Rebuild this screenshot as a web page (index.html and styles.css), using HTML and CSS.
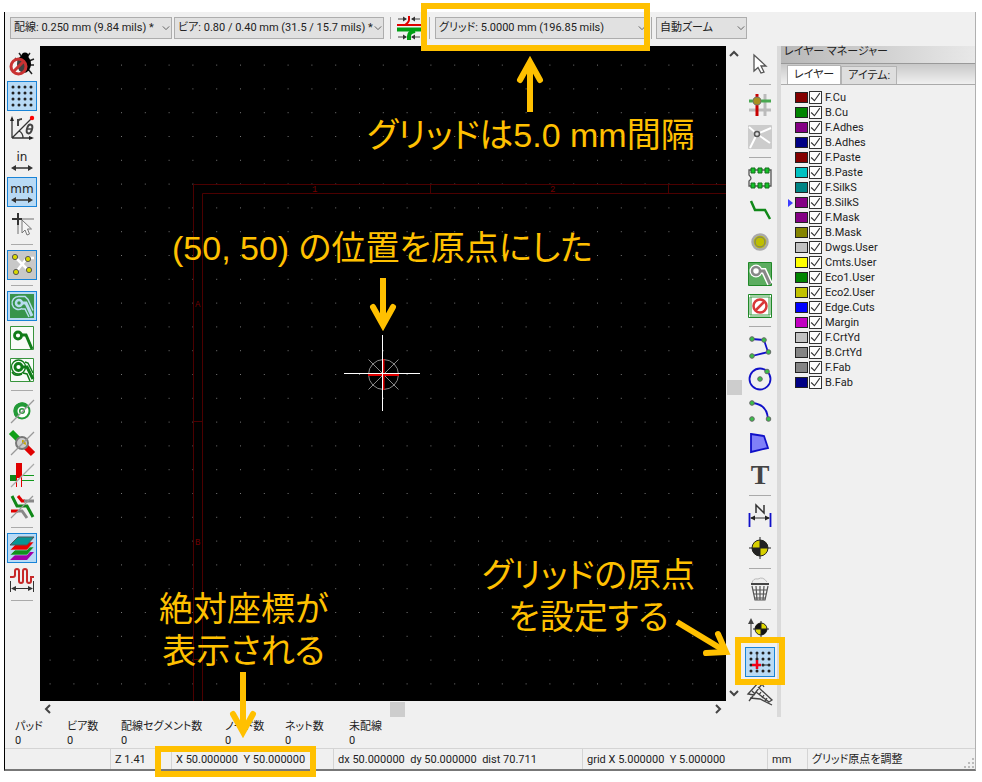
FILE: index.html
```html
<!DOCTYPE html>
<html lang="ja">
<head>
  <meta charset="UTF-8" />
  <meta name="viewport" content="width=device-width, initial-scale=1.0" />
  <title>グリッド原点の設定</title>
  <link rel="stylesheet" href="styles.css">
</head>
<body>
<div class="app">
  <div class="topbar">
    <div class="combo combo-track">
      <select aria-label="配線幅"><option>配線: 0.250 mm (9.84 mils) *</option></select>
      <svg class="chevron" viewBox="0 0 10 6"><path d="M1 1l4 4 4-4"/></svg>
    </div>
    <div class="combo combo-via">
      <select aria-label="ビアサイズ"><option>ビア: 0.80 / 0.40 mm (31.5 / 15.7 mils) *</option></select>
      <svg class="chevron" viewBox="0 0 10 6"><path d="M1 1l4 4 4-4"/></svg>
    </div>
    <span class="vsep"></span>
    <button class="top-btn" aria-label="自動配線幅">
      <svg viewBox="0 0 24 24">
        <path d="M1 3h8M15 3h8M1 21h8M15 21h8" stroke="#444"/>
        <path d="M6 .5L10 3 6 5.500zM18 .5L14 3l4 2.500zM6 18.500l4 2.500-4 2.500zM18 18.500L14 21l4 2.500z" fill="#333"/>
        <path d="M12 0v4q0 2-4 5" fill="none" stroke="#e00000" stroke-width="2"/>
        <path d="M0 9h24" stroke="#e00000" stroke-width="2"/>
        <path d="M0 13.500h24" stroke="#00a014" stroke-width="4"/>
        <path d="M18 15q-6 1-6 5v4" fill="none" stroke="#00a014" stroke-width="4"/>
      </svg>
    </button>
    <span class="vsep"></span>
    <div class="combo combo-grid">
      <select aria-label="グリッド"><option>グリッド: 5.0000 mm (196.85 mils)</option></select>
      <svg class="chevron" viewBox="0 0 10 6"><path d="M1 1l4 4 4-4"/></svg>
    </div>
    <span class="vsep"></span>
    <div class="combo combo-zoom">
      <select aria-label="ズーム"><option>自動ズーム</option></select>
      <svg class="chevron" viewBox="0 0 10 6"><path d="M1 1l4 4 4-4"/></svg>
    </div>
  </div>

  <div class="main">
    <div class="toolbar toolbar-left">
      <button aria-label="DRC オフ">
        <svg viewBox="0 0 24 24">
          <path d="M9 1l3 4M20 1l-3 4M19 9l5-2M20 13h4M18 17l4 5M5 6l4 3" stroke="#222" stroke-width="1.500"/>
          <ellipse cx="14" cy="12" rx="7" ry="9" fill="#000"/><circle cx="15" cy="4" r="3.500" fill="#000"/>
          <circle cx="8.500" cy="14.500" r="7.500" fill="#fff" fill-opacity=".25" stroke="#c93232" stroke-width="3"/>
          <path d="M3.500 19.500l10-10" stroke="#c93232" stroke-width="3"/>
        </svg>
      </button>
      <button class="on" aria-label="グリッド表示">
        <svg viewBox="0 0 24 24"><path d="M3 3h19M3 9h19M3 15h19M3 21h19" stroke="#222" stroke-width="3" stroke-linecap="round" stroke-dasharray="0 6"/></svg>
      </button>
      <button aria-label="極座標">
        <svg viewBox="0 0 24 24">
          <path d="M2 22V2M2 22h20M2 22L21 3M9 15q4 2 4 7" fill="none" stroke="#333" stroke-width="1.300"/>
          <path d="M2 0L0 5h4zM24 22l-5-2v4z" fill="#222"/>
          <path d="M8 10V3M8 5q1-2 4-2" fill="none" stroke="#444" stroke-width="2"/>
          <ellipse cx="19.500" cy="13" rx="2.500" ry="4.500" transform="rotate(18 19.500 13)" fill="none" stroke="#444" stroke-width="2"/>
          <path d="M17 13h5" stroke="#444" stroke-width="1.500"/><circle cx="22" cy="2" r="2.200" fill="#f00"/>
        </svg>
      </button>
      <button class="unit" aria-label="インチ単位"><span>in</span>
        <svg viewBox="0 0 24 6"><path d="M3 3h18" stroke="#333" stroke-width="1.500"/><path d="M6 0L1 3l5 3zM18 0l5 3-5 3z" fill="#333"/></svg>
      </button>
      <button class="unit on" aria-label="ミリ単位"><span>mm</span>
        <svg viewBox="0 0 24 6"><path d="M3 3h18" stroke="#333" stroke-width="1.500"/><path d="M6 0L1 3l5 3zM18 0l5 3-5 3z" fill="#333"/></svg>
      </button>
      <button aria-label="カーソル形状">
        <svg viewBox="0 0 24 24">
          <path d="M2 7h10M8 1v12" stroke="#333" stroke-width="2"/><path d="M12 7h12M8 13v9" stroke="#999" stroke-width="1.500"/>
          <path d="M12 8v13l3-3 2 5 2.500-1-2-5h4z" fill="#f6f6f6" stroke="#777"/>
        </svg>
      </button>
      <hr>
      <button class="on rats" aria-label="ラッツネスト表示">
        <svg viewBox="0 0 24 24">
          <path d="M5 4l14 14M6 19L17 5h7" fill="none" stroke="#fff" stroke-width="2.500"/>
          <g fill="#d8d800" stroke="#555"><circle cx="5" cy="4" r="2.600"/><circle cx="18" cy="6" r="2.600"/><circle cx="6" cy="19" r="2.600"/><circle cx="19" cy="17" r="2.600"/></g>
        </svg>
      </button>
      <hr>
      <button class="on" aria-label="ゾーン塗りつぶし表示">
        <svg viewBox="0 0 24 24">
          <path d="M0 0h24v24H0z" fill="#38944c"/>
          <path d="M9 2.500h6l3 3 5 11M12 15h3l4 8M12 14.500A6.500 6.500 0 1 1 9 2.500" fill="none" stroke="#b8dcf0" stroke-width="1.500"/>
          <path d="M10 9h6l6 13" fill="none" stroke="#b8dcf0" stroke-width="3"/>
          <circle cx="9" cy="9" r="3" fill="#38944c" stroke="#b8dcf0" stroke-width="2.500"/>
        </svg>
      </button>
      <button aria-label="ゾーン非表示">
        <svg viewBox="0 0 24 24">
          <path d="M.5.500h23v23H.5z" fill="#f8fbf8" stroke="#38943c"/>
          <path d="M10 9h6l6 14" fill="none" stroke="#107c18" stroke-width="3"/><circle cx="8" cy="9.500" r="3.500" fill="#fff" stroke="#107c18" stroke-width="2.800"/>
        </svg>
      </button>
      <button aria-label="ゾーン外形表示">
        <svg viewBox="0 0 24 24">
          <path d="M.5.500h23v23H.5z" fill="#f8fbf8" stroke="#38943c"/>
          <path d="M15 4l3 1 5 10M13 15l4 1 3 7M2 14q3 5 10 2" fill="none" stroke="#107c18" stroke-width="1.500"/>
          <circle cx="8.500" cy="9" r="7" fill="none" stroke="#107c18" stroke-width="1.300"/>
          <path d="M11 9h6l6 12" fill="none" stroke="#107c18" stroke-width="3"/><circle cx="8.500" cy="9" r="3.500" fill="#fff" stroke="#107c18" stroke-width="2.800"/>
        </svg>
      </button>
      <hr>
      <button aria-label="パッド輪郭">
        <svg viewBox="0 0 24 24">
          <circle cx="12" cy="12" r="7.500" fill="#fff" stroke="#249a38" stroke-width="2"/>
          <path d="M3.500 12a8.500 8.500 0 0 1 15-5.500L6 18.500A8.500 8.500 0 0 1 3.500 12z" fill="#249a38"/>
          <circle cx="12" cy="12" r="3.800" fill="#249a38" stroke="#fff" stroke-width="1.500"/><circle cx="12" cy="12" r="1.500" fill="#fff"/>
          <path d="M1 24L24 1" stroke="#999" stroke-width="1.200"/>
        </svg>
      </button>
      <button aria-label="ビア輪郭">
        <svg viewBox="0 0 24 24">
          <path d="M1 1l10 10" stroke="#10a018" stroke-width="6"/><path d="M13 13l10 10" stroke="#e00000" stroke-width="6"/>
          <circle cx="12" cy="12" r="6" fill="#ccc" stroke="#777" stroke-width="2"/><path d="M12 12V9q4 0 4 5z" fill="#c8a800"/>
          <path d="M1 24L24 1" stroke="#999" stroke-width="1.200"/>
        </svg>
      </button>
      <button aria-label="配線輪郭">
        <svg viewBox="0 0 24 24">
          <path d="M0 12h7v6H0z" fill="#108818"/><path d="M6 0h6v15H6z" fill="#e00000"/>
          <path d="M12 12.500h12M12 17.500h12" stroke="#10981c"/><path d="M6.500 14v10M11.500 14v10" stroke="#e00000"/>
          <path d="M1 24L24 1" stroke="#aaa" stroke-width="1.200"/>
        </svg>
      </button>
      <button aria-label="ハイコントラスト">
        <svg viewBox="0 0 24 24">
          <path d="M8 1l4 5h3" fill="none" stroke="#e00000" stroke-width="3"/><path d="M14 6h10" stroke="#888" stroke-width="3"/>
          <path d="M2 1l5 10h10l6 11" fill="none" stroke="#108818" stroke-width="3"/>
          <path d="M1 16h7" stroke="#e00000" stroke-width="3"/><path d="M8 16h4l5 7" fill="none" stroke="#888" stroke-width="3"/>
          <path d="M1 23L23 1" stroke="#999" stroke-width="1.200"/>
        </svg>
      </button>
      <hr>
      <button class="on" aria-label="レイヤーマネージャー表示">
        <svg viewBox="0 0 24 24">
          <path d="M8 16h16l-7 8H0z" fill="#a000a8"/><path d="M8 11h16l-7 8H0z" fill="#10901c" stroke="#b4d8f4" stroke-width=".6"/>
          <path d="M8 6h16l-7 8H0z" fill="#e80000" stroke="#b4d8f4" stroke-width=".6"/><path d="M8 1h16l-7 8H0z" fill="#089494" stroke="#555"/>
        </svg>
      </button>
      <button aria-label="マイクロ波ツール">
        <svg viewBox="0 0 24 24">
          <path d="M0 9h3q2 0 2-2V3q0-2 2-2t2 2v10q0 2 2 2t2-2V3q0-2 2-2t2 2v10q0 2 2 2t2-2V9h3" fill="none" stroke="#c62828" stroke-width="2"/>
          <path d="M.5 13v11M23.500 13v11M2 20.500h20" stroke="#333"/><path d="M1 20.500l5-2.500v5zM23 20.500L18 18v5z" fill="#333"/>
        </svg>
      </button>
      <hr>
    </div>

    <div class="view">
      <div class="canvas">
        <svg class="board">
          <defs>
            <pattern id="dots" x="9.600" y="18.600" width="23.800" height="23.800" patternUnits="userSpaceOnUse">
              <rect width="1" height="1" fill="#777"/>
            </pattern>
          </defs>
          <rect width="100%" height="100%" fill="url(#dots)"/>
          <g class="sheet">
            <path d="M3000 138.500H153.500V3000M3000 147.500H162.500V3000M390.500 138v9M628.500 138v9M153 375.500h9M153 613.500h9"/>
            <text x="272" y="146">1</text><text x="510" y="146">2</text>
            <text x="155" y="261">A</text><text x="155" y="499">B</text>
          </g>
          <g fill="none" stroke="#888">
            <circle cx="343.500" cy="328.500" r="15"/><path d="M328.500 313.500l30 30M358.500 313.500l-30 30"/>
          </g>
          <path d="M328 329h31M343.500 313v31" stroke="#e00000" stroke-width="2"/>
          <path d="M304 327.500h76M342.500 289v76" stroke="#fff"/>
        </svg>
      </div>
      <div class="vscroll">
        <svg viewBox="0 0 10 6"><path d="M1 5l4-4 4 4"/></svg>
        <span class="thumb"></span>
        <svg viewBox="0 0 10 6"><path d="M1 1l4 4 4-4"/></svg>
      </div>
      <div class="hscroll">
        <svg viewBox="0 0 6 10"><path d="M5 1L1 5l4 4"/></svg>
        <span class="thumb"></span>
        <svg viewBox="0 0 6 10"><path d="M1 1l4 4-4 4"/></svg>
      </div>
    </div>

    <div class="toolbar toolbar-right">
      <button aria-label="選択">
        <svg viewBox="0 0 24 24"><path d="M6 3v16l4-3.500L13 21l3-1-3-6h5z" fill="#fff" stroke="#555" stroke-width="1.300"/></svg>
      </button>
      <hr>
      <button aria-label="ネットのハイライト">
        <svg viewBox="0 0 24 24">
          <path d="M17 1v22M1 17h22" stroke="#bbb" stroke-width="3"/><path d="M1 8h22" stroke="#48a850" stroke-width="3"/>
          <path d="M9 1v22" stroke="#c80000" stroke-width="3"/><circle cx="9" cy="8" r="4" fill="#a89020" stroke="#776"/>
        </svg>
      </button>
      <button aria-label="ローカルラッツネスト">
        <svg viewBox="0 0 24 24">
          <rect width="24" height="24" rx="1" fill="#ccc"/><path d="M9 9L1 2M9 9l14-6M9 9L2 23M9 9l13 9" stroke="#fff" stroke-width="2"/>
          <circle cx="9" cy="9" r="2.500" fill="#ddd" stroke="#555" stroke-width="1.500"/>
        </svg>
      </button>
      <hr>
      <button aria-label="フットプリントを追加">
        <svg viewBox="0 0 24 24">
          <path d="M1 4h22v16H1v-5q4-2.500 0-6z" fill="#eee" stroke="#555" stroke-width="1.300"/>
          <path d="M3 2h4v5H3zM10 2h4v5h-4zM17 2h4v5h-4zM3 17h4v5H3zM10 17h4v5h-4zM17 17h4v5h-4z" fill="#12c426" stroke="#146c1c"/>
        </svg>
      </button>
      <button aria-label="配線">
        <svg viewBox="0 0 24 24"><path d="M3 3l4 9h10l5 9" fill="none" stroke="#108818" stroke-width="2.500"/></svg>
      </button>
      <button aria-label="ビアを追加">
        <svg viewBox="0 0 24 24"><circle cx="12" cy="12" r="7.500" fill="#bfbf00" stroke="#aaa" stroke-width="2.500"/><circle cx="12" cy="12" r="5" fill="#bfbf00" stroke="#777"/></svg>
      </button>
      <button aria-label="ゾーンを追加">
        <svg viewBox="0 0 24 24">
          <path d="M.5.500h23v23H.5z" fill="#5cac60" stroke="#208828"/>
          <path d="M9 9h7l6 13" fill="none" stroke="#fff" stroke-width="6"/><circle cx="8" cy="9" r="6.500" fill="#fff"/>
          <path d="M11 9h5l6 13" fill="none" stroke="#888" stroke-width="3"/><circle cx="8" cy="9" r="4" fill="#fff" stroke="#888" stroke-width="2.500"/>
        </svg>
      </button>
      <button aria-label="禁止エリアを追加">
        <svg viewBox="0 0 24 24">
          <path d="M.5.500h23v23H.5z" fill="#fff" stroke="#208828"/><path d="M2.500 2.500h19v19h-19z" fill="none" stroke="#40a048" stroke-width="3" stroke-dasharray="1 1"/>
          <circle cx="12" cy="12" r="6.500" fill="#fff" stroke="#d83838" stroke-width="2.500"/><path d="M7.500 16.500l9-9" stroke="#d83838" stroke-width="2.500"/>
        </svg>
      </button>
      <hr>
      <button aria-label="線を追加">
        <svg viewBox="0 0 24 24">
          <path d="M4 4l12 1 4 12L4 21" fill="none" stroke="#1010c8" stroke-width="1.800"/>
          <g class="node"><circle cx="4" cy="4" r="2.300"/><circle cx="16" cy="5" r="2.300"/><circle cx="20.500" cy="17" r="2.300"/><circle cx="4" cy="21" r="2.300"/></g>
        </svg>
      </button>
      <button aria-label="円を追加">
        <svg viewBox="0 0 24 24">
          <circle cx="12" cy="12" r="10.500" fill="none" stroke="#1010c8" stroke-width="1.800"/>
          <g class="node"><circle cx="12" cy="12" r="2.300"/><circle cx="19" cy="4.500" r="2.300"/></g>
        </svg>
      </button>
      <button aria-label="円弧を追加">
        <svg viewBox="0 0 24 24">
          <path d="M4 4q15 1 16 16" fill="none" stroke="#1010c8" stroke-width="1.800"/>
          <g class="node"><circle cx="4" cy="4" r="2.300"/><circle cx="4" cy="20" r="2.300"/><circle cx="20.500" cy="20" r="2.300"/></g>
        </svg>
      </button>
      <button aria-label="多角形を追加">
        <svg viewBox="0 0 24 24"><path d="M3 3l13 2 4 12-17 4z" fill="#8080f8" stroke="#1010c8" stroke-width="1.800"/></svg>
      </button>
      <button class="text-tool" aria-label="テキストを追加">T</button>
      <hr>
      <button aria-label="寸法線を追加">
        <svg viewBox="0 0 24 24">
          <path d="M1.500 9v14M22.500 9v14" stroke="#1010c8" stroke-width="1.800"/><path d="M3 14h18" stroke="#333"/>
          <path d="M2 14l5-2.500v5zM22 14l-5-2.500v5z" fill="#222"/><path d="M8 9V1l8 8V1" fill="none" stroke="#333" stroke-width="1.500"/>
        </svg>
      </button>
      <button aria-label="層合わせマーク">
        <svg viewBox="0 0 24 24">
          <circle cx="12" cy="12" r="8" fill="#d8d000" stroke="#222"/><path d="M12 12V4a8 8 0 0 1 8 8zM12 12v8a8 8 0 0 1-8-8z" fill="#222"/>
          <path d="M12 1v22M1 12h22" stroke="#222"/>
        </svg>
      </button>
      <hr>
      <button aria-label="削除">
        <svg viewBox="0 0 24 24">
          <path d="M4 6q1-5 6-4 5-3 9 3" fill="#eee" stroke="#bbb"/><path d="M3 7h18" stroke="#444" stroke-width="2"/>
          <path d="M4 9l3 14h10l3-14M8 9l1 14M12 9v14M16 9l-1 14M5 13h14M6 17h12M7 21h10" fill="none" stroke="#555" stroke-width="1.200"/>
        </svg>
      </button>
      <hr>
      <button aria-label="ドリル原点">
        <svg viewBox="0 0 24 24">
          <path d="M3 22V2M3 22h20" stroke="#444"/><path d="M3 0L0 6h6zM24 22l-6-3v6z" fill="#444"/>
          <circle cx="13" cy="11" r="6" fill="#e0d800" stroke="#222"/><path d="M13 11V5a6 6 0 0 0-6 6zM13 11v6a6 6 0 0 0 6-6z" fill="#111"/><path d="M13 3v16M5 11h16" stroke="#222"/>
        </svg>
      </button>
      <button class="on" aria-label="グリッド原点">
        <svg viewBox="0 0 24 24">
          <path d="M3 3h19M3 9h19M3 15h19M3 21h19" stroke="#222" stroke-width="3" stroke-linecap="round" stroke-dasharray="0 6"/>
          <path d="M9 3v6M15 15h6" stroke="#333"/><path d="M9 10v9M4 15h9" stroke="#f00018" stroke-width="2.500"/>
        </svg>
      </button>
      <button aria-label="計測">
        <svg viewBox="0 0 24 24">
          <path d="M0 12L10 1l3 2L6 13zM2 16l10 1 12 6M1 19L14 2l2 3M10 5l14 13-3 2L8 10M4 9l3 3M13 10l-2 3M16 13l-2 3M19 16l-2 3" fill="none" stroke="#444" stroke-width="1.300"/>
        </svg>
      </button>
    </div>

    <div class="layers">
      <div class="layers-title">レイヤー マネージャー</div>
      <div class="tabs">
        <button class="tab active">レイヤー</button>
        <button class="tab">アイテム:</button>
      </div>
      <ul class="layer-list" id="layer-list"></ul>
    </div>
  </div>

  <dl class="info">
    <div><dt>パッド</dt><dd>0</dd></div>
    <div><dt>ビア数</dt><dd>0</dd></div>
    <div><dt>配線セグメント数</dt><dd>0</dd></div>
    <div><dt>ノード数</dt><dd>0</dd></div>
    <div><dt>ネット数</dt><dd>0</dd></div>
    <div><dt>未配線</dt><dd>0</dd></div>
  </dl>

  <div class="status">
    <span></span>
    <span>Z 1.41</span>
    <span>X 50.000000&nbsp; Y 50.000000</span>
    <span>dx 50.000000&nbsp; dy 50.000000&nbsp; dist 70.711</span>
    <span>grid X 5.000000&nbsp; Y 5.000000</span>
    <span>mm</span>
    <span>グリッド原点を調整</span>
    <svg class="grip" viewBox="0 0 10 10"><path d="M8 0h2v2H8zM4 4h2v2H4zM8 4h2v2H8zM0 8h2v2H0zM4 8h2v2H4zM8 8h2v2H8z" fill="#bbb"/></svg>
  </div>
</div>

<!-- 注釈 -->
<div class="notes">
  <svg class="arrows">
    <path d="M530 112V64M383 278v46M243 672v58M677 622l48 29"/>
    <path class="head" d="M520 80l10-18 10 18M373 307l10 18 10-18M233 714l10 18 10-18M718 634l8 18-20 1"/>
  </svg>
  <div class="mark mark-grid"></div>
  <div class="mark mark-origin"></div>
  <div class="mark mark-coords"></div>
  <p class="note note-grid">グリッドは5.0 mm間隔</p>
  <p class="note note-pos">(50, 50) の位置を原点にした</p>
  <p class="note note-origin">グリッドの原点<br>を設定する</p>
  <p class="note note-abs">絶対座標が<br>表示される</p>
</div>

<script>
  const layers = [
    ['F.Cu', '#840000'], ['B.Cu', '#008400'], ['F.Adhes', '#840084'], ['B.Adhes', '#000084'],
    ['F.Paste', '#840000'], ['B.Paste', '#00c2c2'], ['F.SilkS', '#008484'], ['B.SilkS', '#840084'],
    ['F.Mask', '#840084'], ['B.Mask', '#848400'], ['Dwgs.User', '#c2c2c2'], ['Cmts.User', '#ffff00'],
    ['Eco1.User', '#008400'], ['Eco2.User', '#c2c200'], ['Edge.Cuts', '#0000ff'], ['Margin', '#c200c2'],
    ['F.CrtYd', '#c2c2c2'], ['B.CrtYd', '#848484'], ['F.Fab', '#848484'], ['B.Fab', '#000084']
  ];

  document.getElementById('layer-list').innerHTML = layers.map(([name, color]) => `
    <li class="${name === 'B.SilkS' ? 'current' : ''}">
      <span class="swatch" style="background:${color}"></span>
      <label><span class="check"><input type="checkbox" checked><svg viewBox="0 0 12 12"><path d="M2 6l3 3 5-7"/></svg></span>${name}</label>
    </li>`).join('');
</script>
</body>
</html>
```
FILE: styles.css
```css
* { box-sizing: border-box; margin: 0; padding: 0; }

body {
  position: relative;
  min-height: 100vh;
  background: #fff;
  color: #222;
  font-family: Roboto, "Noto Sans CJK JP", sans-serif;
  font-size: 11px;
  font-feature-settings: "palt";
  padding: 12px 6px 11px 4px;
}

button, select, input { font: inherit; color: inherit; font-feature-settings: inherit; }
button { border: 0; background: none; }
svg { display: block; overflow: visible; }

.app {
  display: flex;
  flex-direction: column;
  min-height: calc(100vh - 23px);
  background: #f0f0f0;
  border-left: 1px solid #000;
  border-right: 1px solid #b0b0b0;
  border-bottom: 2px solid #777;
}

/* top toolbar */
.topbar {
  display: flex;
  align-items: center;
  height: 34px;
  padding: 0 5px 3px;
}
.combo { position: relative; height: 22px; }
.combo select {
  appearance: none;
  width: 100%;
  height: 100%;
  padding: 0 3px;
  border: 1px solid #adadad;
  border-radius: 0;
  background: #e1e1e1;
  white-space: nowrap;
}
.combo .chevron {
  position: absolute;
  right: 2px;
  top: 8px;
  width: 8px;
  height: 6px;
  pointer-events: none;
}
.chevron path, .vscroll path, .hscroll path { fill: none; stroke: #444; }
.combo-track { width: 162px; margin-right: 2px; }
.combo-via { width: 210px; margin-right: 6px; }
.combo-grid { width: 213px; margin: 0 3px 0 5px; }
.combo-zoom { width: 91px; margin-left: 4px; }
.vsep { width: 1px; height: 22px; background: #aaa; }
.top-btn { width: 24px; height: 24px; margin: 0 8px 0 6px; }

/* side toolbars */
.main { display: flex; flex: 1; min-height: 670px; }
.toolbar { display: flex; flex-direction: column; flex: none; width: 35px; padding-top: 2px; }
.toolbar button {
  width: 30px;
  height: 30px;
  margin: 1px 2px;
  padding: 2px;
  border: 1px solid transparent;
}
.toolbar button svg { width: 24px; height: 24px; }
.toolbar button.on { background: #b8daf5; border-color: #1883d7; }
.toolbar button.rats { background: #c8c8c8; }
.toolbar hr {
  width: 22px;
  height: 1px;
  margin: 4px 6px;
  border: 0;
  background: #aaa;
}
.toolbar-right { padding-left: 1px; }
.toolbar .unit {
  display: flex;
  flex-direction: column;
  align-items: center;
  justify-content: center;
  font-family: "DejaVu Sans", sans-serif;
  font-size: 12px;
  line-height: 15px;
  color: #222;
}
.toolbar .unit svg { height: 6px; }
.toolbar .text-tool {
  padding: 0;
  font-family: "Liberation Serif", serif;
  font-size: 28px;
  font-weight: 700;
  line-height: 28px;
  color: #444;
}
.node { fill: #38c048; stroke: #666; }

/* board view */
.view {
  flex: 1;
  min-width: 0;
  display: grid;
  grid-template-columns: 1fr 16px;
  grid-template-rows: 1fr 16px;
}
.canvas { background: #000; overflow: hidden; display: flex; }
.board { flex: 1; min-width: 0; overflow: hidden; }
.sheet path { fill: none; stroke: #4c0000; }
.sheet text { font-family: "Liberation Mono", monospace; font-size: 9px; fill: #700000; }
.vscroll, .hscroll { display: flex; align-items: center; justify-content: space-between; padding: 5px 0; }
.vscroll { flex-direction: column; }
.hscroll { padding: 0 5px; }
.vscroll svg { width: 10px; height: 6px; }
.hscroll svg { width: 6px; height: 10px; }
.vscroll path, .hscroll path { stroke-width: 2; }
.thumb { width: 15px; height: 15px; background: #cdcdcd; }
.vscroll .thumb { margin-top: 28px; }
.hscroll .thumb { margin-left: 28px; }

/* layer manager */
.layers { flex: none; width: 198px; border-left: 4px solid #dadada; }
.layers-title {
  height: 17px;
  padding-left: 3px;
  line-height: 12px;
  background: linear-gradient(90deg, #b8b8b8, #e8e8e8);
}
.tabs {
  display: flex;
  align-items: flex-end;
  height: 22px;
  padding-left: 6px;
  border-top: 1px solid #999;
  border-bottom: 1px solid #aaa;
  background: linear-gradient(#c8c8c8, #f0f0f0);
}
.tab {
  height: 18px;
  padding: 0 6px;
  line-height: 16px;
  border: 1px solid #b4b4b4;
  border-bottom: 0;
  background: #dedede;
}
.tab.active { height: 19px; background: #fff; }
.layer-list { list-style: none; margin-top: 5px; }
.layer-list li {
  position: relative;
  display: flex;
  align-items: center;
  height: 15px;
  padding-left: 14px;
}
.layer-list li.current::before {
  content: "";
  position: absolute;
  left: 7px;
  border: 4px solid transparent;
  border-left: 5px solid #3c3cff;
  border-right: 0;
}
.swatch { width: 13px; height: 11px; border: 1px solid #222; margin-right: 1px; }
.layer-list label { display: flex; align-items: center; gap: 3px; line-height: 15px; }
.check { position: relative; width: 13px; height: 13px; }
.check input {
  appearance: none;
  display: block;
  width: 13px;
  height: 13px;
  border: 1px solid #333;
  background: #fff;
}
.check svg { position: absolute; left: 0; top: 0; width: 13px; height: 13px; pointer-events: none; }
.check path { fill: none; stroke: #333; }
.check input:not(:checked) + svg { display: none; }

/* info and status rows */
.info { display: flex; height: 31px; padding: 3px 10px 0; line-height: 14px; }
.info div { white-space: nowrap; }
.info div:nth-child(1) { width: 52px; }
.info div:nth-child(2) { width: 54px; }
.info div:nth-child(3) { width: 104px; }
.info div:nth-child(4) { width: 60px; }
.info div:nth-child(5) { width: 64px; }
.status {
  display: flex;
  align-items: center;
  height: 21px;
  border-top: 1px solid #d4d4d4;
}
.status span { height: 20px; padding-left: 4px; line-height: 21px; white-space: nowrap; border-left: 1px solid #d4d4d4; }
.status span:nth-child(1) { width: 105px; border-left: 0; }
.status span:nth-child(2) { width: 61px; }
.status span:nth-child(3) { width: 162px; }
.status span:nth-child(4) { width: 249px; }
.status span:nth-child(5) { width: 185px; }
.status span:nth-child(6) { width: 40px; }
.status span:nth-child(7) { flex: 1; }
.grip { width: 10px; height: 10px; align-self: flex-end; margin: 1px; }

/* callouts over the window */
.notes { position: absolute; inset: 0; pointer-events: none; }
.arrows { position: absolute; left: 0; top: 0; width: 100%; height: 100%; }
.arrows path { fill: none; stroke: #ffc000; stroke-width: 6; }
.arrows .head { stroke-linecap: round; }
.mark { position: absolute; border: 6px solid #ffc000; }
.mark-grid { left: 421px; top: 3px; width: 229px; height: 48px; }
.mark-origin { left: 735px; top: 637px; width: 50px; height: 48px; }
.mark-coords { left: 155px; top: 746px; width: 161px; height: 31px; }
.note {
  position: absolute;
  font-family: "Liberation Sans", "Noto Sans CJK JP", sans-serif;
  font-size: 34px;
  line-height: 42px;
  text-align: center;
  white-space: nowrap;
  color: #ffc000;
}
.note-grid { left: 367px; top: 114px; }
.note-pos { left: 172px; top: 227px; }
.note-origin { left: 482px; top: 554px; }
.note-abs { left: 159px; top: 588px; }
```
